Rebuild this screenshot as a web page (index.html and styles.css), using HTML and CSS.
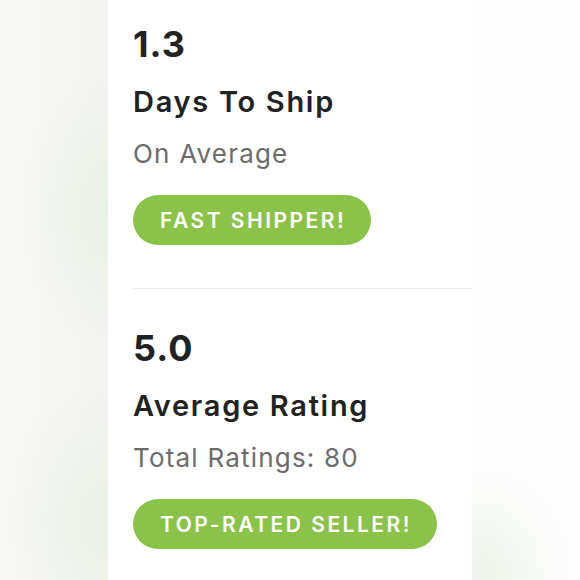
FILE: index.html
```html
<!DOCTYPE html>
<html lang="en">
<head>
<meta charset="utf-8">
<title>Seller stats</title>
<link rel="stylesheet" href="styles.css">
</head>
<body>
<div class="page">
  <div class="side side-left"></div>
  <main class="panel">
    <section class="stat stat-first">
      <div class="stat-value">1.3</div>
      <div class="stat-title">Days To Ship</div>
      <div class="stat-sub">On Average</div>
      <span class="badge">FAST SHIPPER!</span>
    </section>
    <section class="stat">
      <div class="stat-value">5.0</div>
      <div class="stat-title">Average Rating</div>
      <div class="stat-sub">Total Ratings: 80</div>
      <span class="badge">TOP-RATED SELLER!</span>
    </section>
  </main>
  <div class="side side-right"></div>
</div>
</body>
</html>
```
FILE: styles.css
```css
html, body {
  margin: 0;
  padding: 0;
  height: 100%;
}
body {
  font-family: Inter, "Open Sans", sans-serif;
  background: #fbfbfb;
}
.page {
  display: flex;
  height: 580px;
  overflow: hidden;
}
.side {
  width: 108px;
  flex: none;
}
.side-left {
  background:
    radial-gradient(ellipse 90px 140px at 108px 210px, rgba(230, 240, 224, 0.8), rgba(230, 240, 224, 0) 100%),
    radial-gradient(ellipse 110px 140px at 108px 520px, rgba(232, 240, 226, 0.8), rgba(232, 240, 226, 0) 100%),
    linear-gradient(to right, #f9f9f8, #f4f4f3);
}
.side-right {
  background:
    radial-gradient(ellipse 90px 110px at 10px 575px, rgba(234, 242, 229, 0.8), rgba(234, 242, 229, 0) 100%),
    #fdfdfd;
}
.panel {
  width: 364px;
  flex: none;
  background: #ffffff;
  padding-left: 25px;
  box-sizing: border-box;
}
.stat {
  padding: 37px 0 43px 0;
  border-top: 1px solid #ebebeb;
}
.stat-first {
  padding-top: 22px;
  border-top: none;
}
.stat-value {
  font-size: 36px;
  line-height: 44px;
  font-weight: 700;
  color: #222222;
  letter-spacing: 1px;
}
.stat-title {
  margin-top: 19px;
  font-size: 29px;
  line-height: 34px;
  font-weight: 600;
  color: #222222;
  letter-spacing: 1.7px;
}
.stat-sub {
  margin-top: 20px;
  font-size: 26px;
  line-height: 30px;
  font-weight: 400;
  color: #6b6b6b;
  letter-spacing: 1.2px;
}
.badge {
  display: inline-flex;
  align-items: center;
  margin-top: 26px;
  height: 50px;
  padding: 0 25px 0 27px;
  border-radius: 25px;
  background: #8bc34a;
  color: #ffffff;
  font-size: 21px;
  font-weight: 600;
  letter-spacing: 2.5px;
  box-sizing: border-box;
}
```
